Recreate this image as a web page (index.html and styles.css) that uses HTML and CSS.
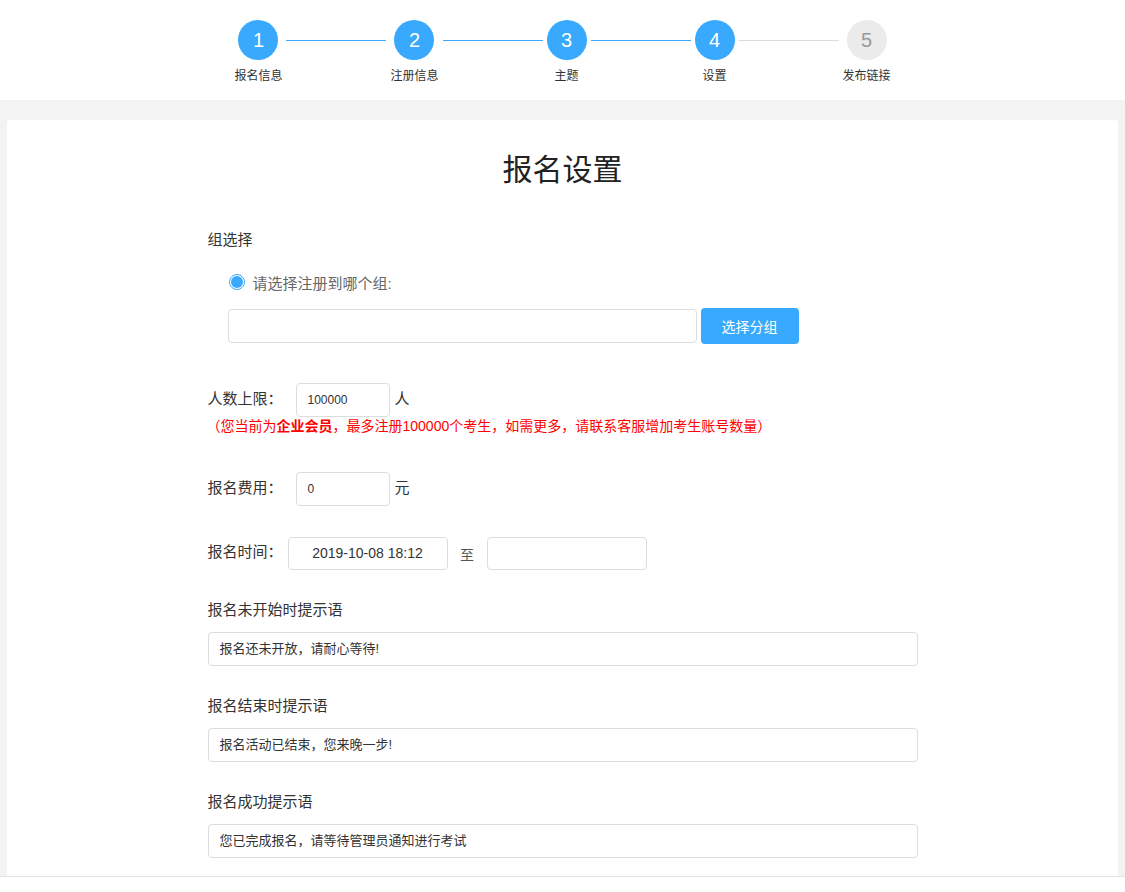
FILE: index.html
```html
<!DOCTYPE html>
<html lang="zh-CN">
<head>
<meta charset="utf-8">
<title>报名设置</title>
<link rel="stylesheet" href="styles.css">
</head>
<body>
<header class="steps-bar">
  <div class="steps">
    <div class="step active"><div class="circle">1</div><div class="step-label">报名信息</div></div>
    <div class="step-line"></div>
    <div class="step active"><div class="circle">2</div><div class="step-label">注册信息</div></div>
    <div class="step-line"></div>
    <div class="step active"><div class="circle">3</div><div class="step-label">主题</div></div>
    <div class="step-line"></div>
    <div class="step active"><div class="circle">4</div><div class="step-label">设置</div></div>
    <div class="step-line gray"></div>
    <div class="step"><div class="circle">5</div><div class="step-label">发布链接</div></div>
  </div>
</header>
<main class="page">
  <section class="card">
    <h1 class="title">报名设置</h1>
    <div class="form">
      <div class="section-label first">组选择</div>
      <div class="radio-row">
        <span class="radio"><span class="radio-dot"></span></span>
        <span class="radio-text">请选择注册到哪个组:</span>
      </div>
      <div class="group-row">
        <div class="input group-input"></div>
        <button class="btn">选择分组</button>
      </div>

      <div class="inline-row count-row">
        <span class="inline-label">人数上限：</span>
        <div class="input small-input">100000</div>
        <span class="unit">人</span>
      </div>
      <div class="note">（您当前为<b>企业会员</b>，最多注册100000个考生，如需更多，请联系客服增加考生账号数量）</div>

      <div class="inline-row fee-row">
        <span class="inline-label">报名费用：</span>
        <div class="input small-input">0</div>
        <span class="unit">元</span>
      </div>

      <div class="inline-row time-row">
        <span class="inline-label time-label">报名时间：</span>
        <div class="input date-input">2019-10-08 18:12</div>
        <span class="to">至</span>
        <div class="input date-input"></div>
      </div>

      <div class="section-label">报名未开始时提示语</div>
      <div class="input wide-input">报名还未开放，请耐心等待!</div>

      <div class="section-label">报名结束时提示语</div>
      <div class="input wide-input">报名活动已结束，您来晚一步!</div>

      <div class="section-label">报名成功提示语</div>
      <div class="input wide-input">您已完成报名，请等待管理员通知进行考试</div>
    </div>
  </section>
</main>
<footer class="bottom-bar"></footer>
</body>
</html>
```
FILE: styles.css
```css
* { box-sizing: border-box; }
html, body { margin: 0; padding: 0; }
body {
  font-family: "Liberation Sans", "Noto Sans CJK SC", sans-serif;
  color: #333;
  background: #f3f3f3;
}
.steps-bar {
  height: 100px;
  background: #fff;
  padding-top: 20px;
}
.steps {
  display: flex;
  justify-content: center;
  align-items: flex-start;
}
.step {
  display: flex;
  flex-direction: column;
  align-items: center;
  min-width: 40px;
}
.circle {
  width: 40px;
  height: 40px;
  border-radius: 50%;
  background: #ebebeb;
  color: #999;
  font-size: 20px;
  line-height: 40px;
  text-align: center;
}
.step.active .circle {
  background: #39a9fd;
  color: #fff;
}
.step-label {
  margin-top: 8px;
  font-size: 12px;
  line-height: 16px;
  color: #333;
  white-space: nowrap;
}
.step-line {
  width: 100px;
  height: 1px;
  margin: 20px 4px 0;
  background: #39a9fd;
}
.step-line.gray { background: #dcdcdc; }

.page {
  padding: 20px 7px 0;
}
.card {
  background: #fff;
  border-radius: 4px;
  padding: 30px 0 60px;
  min-height: 800px;
}
.title {
  margin: 0;
  text-align: center;
  font-size: 30px;
  line-height: 40px;
  font-weight: normal;
  color: #222;
}
.form {
  width: 710px;
  margin: 0 auto;
}
.section-label {
  font-size: 15px;
  line-height: 20px;
  margin-top: 30px;
  color: #333;
}
.section-label.first { margin-top: 40px; }
.radio-row {
  display: flex;
  align-items: center;
  height: 20px;
  margin-top: 22px;
  padding-left: 21px;
}
.radio {
  width: 16px;
  height: 16px;
  border-radius: 50%;
  border: 1px solid #39a9fd;
  padding: 1px;
  display: flex;
}
.radio-dot {
  flex: 1;
  border-radius: 50%;
  background: #39a9fd;
}
.radio-text {
  margin-left: 8px;
  font-size: 15px;
  color: #666;
}
.group-row {
  display: flex;
  align-items: center;
  margin-top: 16px;
  padding-left: 20px;
}
.input {
  height: 34px;
  border: 1px solid #ddd;
  border-radius: 4px;
  background: #fff;
  font-size: 13px;
  line-height: 32px;
  padding: 0 11px;
  color: #333;
}
.group-input { width: 469px; }
.btn {
  width: 98px;
  height: 36px;
  margin-left: 4px;
  border: 0;
  border-radius: 4px;
  background: #39a9fd;
  color: #fff;
  font-family: inherit;
  font-size: 14px;
}
.inline-row {
  display: flex;
  align-items: center;
}
.count-row { margin-top: 39px; }
.fee-row { margin-top: 37px; }
.time-row { margin-top: 31px; }
.inline-label {
  font-size: 15px;
  width: 88px;
  line-height: 20px;
  padding-bottom: 3px;
}
.time-label { width: 80px; }
.small-input { width: 94px; font-size: 12px; }
.unit {
  margin-left: 5px;
  font-size: 15px;
  line-height: 20px;
  padding-bottom: 3px;
}
.note {
  font-size: 14px;
  line-height: 18px;
  color: #ff0000;
  margin-left: -1px;
}
.note b { font-weight: bold; }
.date-input {
  width: 160px;
  height: 33px;
  line-height: 31px;
  text-align: center;
  font-size: 14px;
}
.to {
  width: 39px;
  text-align: center;
  font-size: 14px;
  color: #555;
}
.wide-input {
  width: 710px;
  margin-top: 12px;
}
.bottom-bar {
  position: fixed;
  left: 0;
  right: 0;
  bottom: 0;
  height: 16px;
  background: #fff;
  border-top: 1px solid #e3e3e3;
}
```
